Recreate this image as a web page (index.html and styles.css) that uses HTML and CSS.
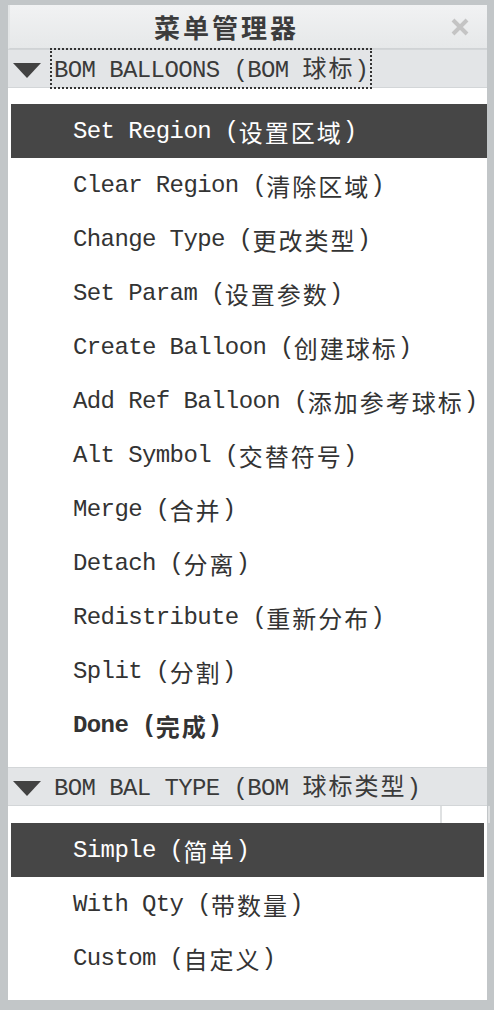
FILE: index.html
```html
<!DOCTYPE html>
<html lang="zh-CN">
<head>
  <meta charset="UTF-8">
  <title>菜单管理器</title>
  <link rel="stylesheet" href="styles.css">
</head>
<body>
  <div class="panel">
    <div class="title-bar">
      <h1 class="title">菜单管理器</h1>
      <span class="close">
        <svg width="20" height="20" viewBox="0 0 20 20"><path d="M3 3 L17 17 M17 3 L3 17" stroke="#c4c4c4" stroke-width="4"/></svg>
      </span>
    </div>

    <div class="group-head">
      <span class="arrow"></span>
      <span class="group-name focus">BOM BALLOONS (BOM <span class="zh">球标</span>)</span>
    </div>
    <ul class="menu">
      <li class="item active">Set Region (<span class="zh">设置区域</span>)</li>
      <li class="item">Clear Region (<span class="zh">清除区域</span>)</li>
      <li class="item">Change Type (<span class="zh">更改类型</span>)</li>
      <li class="item">Set Param (<span class="zh">设置参数</span>)</li>
      <li class="item">Create Balloon (<span class="zh">创建球标</span>)</li>
      <li class="item">Add Ref Balloon (<span class="zh">添加参考球标</span>)</li>
      <li class="item">Alt Symbol (<span class="zh">交替符号</span>)</li>
      <li class="item">Merge (<span class="zh">合并</span>)</li>
      <li class="item">Detach (<span class="zh">分离</span>)</li>
      <li class="item">Redistribute (<span class="zh">重新分布</span>)</li>
      <li class="item">Split (<span class="zh">分割</span>)</li>
      <li class="item done">Done (<span class="zh">完成</span>)</li>
    </ul>

    <div class="group-head">
      <span class="arrow"></span>
      <span class="group-name">BOM BAL TYPE (BOM <span class="zh">球标类型</span>)</span>
    </div>
    <ul class="menu menu-2">
      <li class="item active">Simple (<span class="zh">简单</span>)</li>
      <li class="item">With Qty (<span class="zh">带数量</span>)</li>
      <li class="item">Custom (<span class="zh">自定义</span>)</li>
    </ul>
  </div>
</body>
</html>
```

FILE: styles.css
```css
* { margin: 0; padding: 0; box-sizing: border-box; }
body {
  background: #ffffff;
  font-family: "Liberation Mono", "Noto Sans CJK SC", monospace;
  color: #333333;
}
.panel {
  width: 494px;
  border-style: solid;
  border-color: #c2c6c8;
  border-width: 5px 7px 10px 8px;
  background: #ffffff;
}
.title-bar {
  height: 44px;
  display: flex;
  align-items: center;
  background: linear-gradient(#f1f2f3, #e6e8e9);
  border-left: 2px solid #e4e6e7;
  border-bottom: 1px solid #d0d3d5;
}
.title {
  flex: 1;
  text-align: center;
  font-family: "Noto Sans CJK SC", sans-serif;
  font-size: 26px;
  font-weight: bold;
  letter-spacing: 3px;
  color: #3c3c3c;
}
.close {
  width: 44px;
  display: flex;
  padding-left: 7px;
}
.group-head {
  height: 39px;
  display: flex;
  align-items: center;
  background: #e3e5e7;
  border-bottom: 1px solid #d3d6d8;
  border-top: 1px solid #d3d6d8;
}
.arrow {
  width: 0; height: 0;
  margin: 3px 9px 0 5px;
  border-left: 14px solid transparent;
  border-right: 14px solid transparent;
  border-top: 15px solid #424242;
}
.group-name {
  font-size: 24px;
  letter-spacing: -0.6px;
  color: #3a3a3a;
  line-height: 33px;
  padding: 0 2px;
  border: 2px dotted transparent;
}
.group-name.focus { border-color: #333333; }
.zh {
  font-family: "Noto Sans CJK SC", sans-serif;
  font-size: 24px;
  letter-spacing: 2px;
}
.menu {
  list-style: none;
  padding: 16px 0 15px 3px;
}
.menu-2 {
  padding-top: 0;
  padding-right: 3px;
}
.menu-2::before {
  content: "";
  display: block;
  height: 17px;
  width: 46px;
  margin-left: 429px;
  border-left: 2px solid #dfe1e2;
  border-right: 2px solid #dfe1e2;
}
.item {
  height: 54px;
  display: flex;
  align-items: center;
  padding-left: 62px;
  font-size: 24px;
  letter-spacing: -0.6px;
  white-space: pre;
  color: #333333;
}
.item.active {
  background: #464646;
  color: #ffffff;
}
.item.done { font-weight: bold; }
```
